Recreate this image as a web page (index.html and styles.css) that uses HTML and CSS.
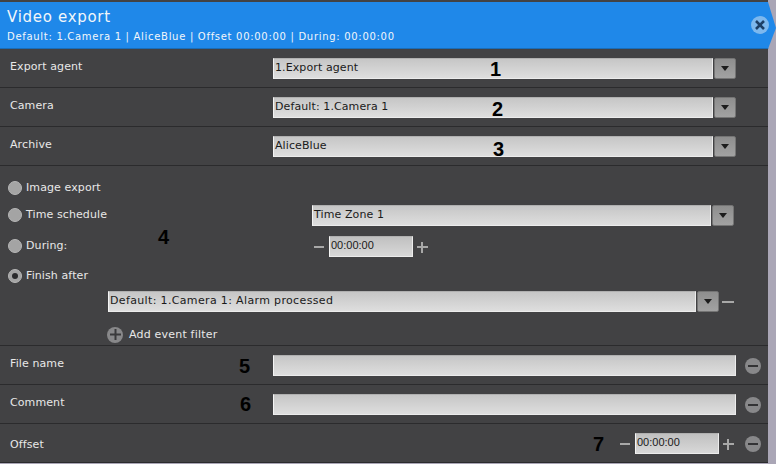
FILE: index.html
```html
<!DOCTYPE html>
<html lang="en">
<head>
  <meta charset="UTF-8">
  <title>Video export</title>
  <link rel="stylesheet" href="styles.css">
</head>
<body>

  <div class="panel">
    <div class="header">
      <div class="title">Video export</div>
      <div class="subtitle">Default: 1.Camera 1 | AliceBlue | Offset 00:00:00 | During: 00:00:00</div>
      <div class="close">
        <svg width="12" height="12" viewBox="0 0 12 12"><path d="M2 2l8 8M10 2l-8 8" stroke="#1d3f66" stroke-width="2.6"/></svg>
      </div>
    </div>

    <div class="row">
      <div class="row-label">Export agent</div>
      <div class="combo">
        <div class="field">1.Export agent</div>
        <div class="arrow"><span class="tri"></span></div>
      </div>
      <span class="mark mark-1">1</span>
    </div>

    <div class="row">
      <div class="row-label">Camera</div>
      <div class="combo">
        <div class="field">Default: 1.Camera 1</div>
        <div class="arrow"><span class="tri"></span></div>
      </div>
      <span class="mark mark-2">2</span>
    </div>

    <div class="row">
      <div class="row-label">Archive</div>
      <div class="combo">
        <div class="field">AliceBlue</div>
        <div class="arrow"><span class="tri"></span></div>
      </div>
      <span class="mark mark-3">3</span>
    </div>

    <div class="mode">
      <span class="mark mark-4">4</span>

      <div class="mode-line line-image">
        <div class="radio-label"><span class="radio"></span>Image export</div>
      </div>

      <div class="mode-line line-time">
        <div class="radio-label"><span class="radio"></span>Time schedule</div>
        <div class="combo combo-zone">
          <div class="field">Time Zone 1</div>
          <div class="arrow"><span class="tri"></span></div>
        </div>
      </div>

      <div class="mode-line line-during">
        <div class="radio-label"><span class="radio"></span>During:</div>
        <div class="stepper">
          <span class="step-minus"></span>
          <div class="field time-field">00:00:00</div>
          <span class="step-plus"></span>
        </div>
      </div>

      <div class="mode-line line-finish">
        <div class="radio-label"><span class="radio radio-on"></span>Finish after</div>
      </div>

      <div class="filter-line">
        <div class="combo combo-filter">
          <div class="field">Default: 1.Camera 1: Alarm processed</div>
          <div class="arrow"><span class="tri"></span></div>
        </div>
        <span class="step-minus"></span>
      </div>

      <div class="add-line">
        <span class="round-btn">
          <svg width="11" height="11" viewBox="0 0 11 11"><path d="M5.5 0v11M0 5.5h11" stroke="#3a3a3c" stroke-width="2"/></svg>
        </span>
        Add event filter
      </div>
    </div>

    <div class="row">
      <div class="row-label">File name</div>
      <div class="field wide-field"></div>
      <span class="round-btn remove-btn"><span class="bar"></span></span>
      <span class="mark mark-5">5</span>
    </div>

    <div class="row">
      <div class="row-label">Comment</div>
      <div class="field wide-field"></div>
      <span class="round-btn remove-btn"><span class="bar"></span></span>
      <span class="mark mark-6">6</span>
    </div>

    <div class="row row-offset">
      <div class="row-label">Offset</div>
      <div class="stepper">
        <span class="step-minus"></span>
        <div class="field time-field">00:00:00</div>
        <span class="step-plus"></span>
      </div>
      <span class="round-btn remove-btn"><span class="bar"></span></span>
      <span class="mark mark-7">7</span>
    </div>
  </div>

</body>
</html>
```

FILE: styles.css
```css
body {
  margin: 0;
  height: 464px;
  overflow: hidden;
  background-color: #aaa6b6;
  font-family: "DejaVu Sans", Verdana, sans-serif;
  font-size: 11px;
  letter-spacing: 0.1px;
  color: #e8e8e8;
}

.panel {
  position: relative;
  width: 768px;
  height: 463px;
  padding-top: 2px;
  box-sizing: border-box;
  background-color: #424244;
}

.header {
  position: relative;
  width: 776px;
  height: 47px;
  box-sizing: border-box;
  padding: 6px 0 0 7px;
  background-color: #1f88e9;
  border-bottom: 1px solid #1a6db8;
  clip-path: polygon(0 0, 768px 0, 776px 26px, 768px 47px, 0 47px);
  color: #f2f6fa;
}

.title {
  font-size: 15px;
  line-height: 18px;
  letter-spacing: 0.7px;
}

.subtitle {
  margin-top: 4px;
  font-size: 10px;
  line-height: 13px;
  letter-spacing: 0.7px;
}

.close {
  position: absolute;
  right: 7px;
  top: 14px;
  width: 18px;
  height: 18px;
  display: flex;
  align-items: center;
  justify-content: center;
  border-radius: 50%;
  background-color: #7db8ee;
}

.row {
  position: relative;
  display: flex;
  align-items: flex-start;
  height: 39px;
  box-sizing: border-box;
  padding: 9px 0 0 10px;
  border-bottom: 1px solid #2b2b2d;
}

.row-label {
  width: 263px;
  line-height: 17px;
}

.combo {
  display: flex;
  gap: 1px;
  width: 463px;
}

.field {
  flex: 1;
  height: 21px;
  box-sizing: border-box;
  padding: 0 1px;
  line-height: 17px;
  color: #1a1a1a;
  background: linear-gradient(#c6c6c6, #dedede);
  border: 1px solid #ececec;
  border-top-color: #b0b0b0;
  border-left-color: #f4f4f4;
}

.arrow {
  display: flex;
  align-items: center;
  justify-content: center;
  width: 22px;
  height: 21px;
  box-sizing: border-box;
  background: linear-gradient(#8e8e8e, #a2a2a2);
  border: 1px solid #747474;
  border-radius: 2px;
}

.tri {
  width: 0;
  height: 0;
  border-left: 4px solid transparent;
  border-right: 4px solid transparent;
  border-top: 5px solid #1c1c1c;
}

.wide-field {
  flex: none;
  width: 463px;
}

.round-btn {
  display: flex;
  align-items: center;
  justify-content: center;
  width: 16px;
  height: 16px;
  border-radius: 50%;
  background-color: #88888a;
}

.remove-btn {
  margin: 3px 0 0 9px;
}

.bar {
  width: 10px;
  height: 2px;
  background-color: #333335;
}

.mode {
  position: relative;
  height: 180px;
  box-sizing: border-box;
  padding: 11px 0 0 8px;
  border-bottom: 1px solid #2b2b2d;
}

.mode-line {
  display: flex;
  height: 21px;
}

.line-time {
  margin-top: 7px;
}

.line-during {
  margin-top: 10px;
}

.line-finish {
  margin-top: 8px;
}

.radio-label {
  display: flex;
  align-items: center;
  gap: 4px;
  width: 304px;
  height: 21px;
}

.line-time .radio-label,
.line-during .radio-label {
  height: 19px;
}

.radio {
  display: flex;
  align-items: center;
  justify-content: center;
  width: 14px;
  height: 14px;
  box-sizing: border-box;
  border-radius: 50%;
  background-color: #a4a4a4;
  border: 1px solid #b6b6b6;
}

.radio-on::after {
  content: "";
  width: 6px;
  height: 6px;
  border-radius: 50%;
  background-color: #2a2a2c;
}

.combo-zone {
  width: 422px;
}

.stepper {
  display: flex;
  align-items: center;
}

.time-field {
  flex: none;
  width: 84px;
  margin: 0 4px 0 5px;
  font-family: "Liberation Sans", Arial, sans-serif;
  letter-spacing: 0;
  background: linear-gradient(#c0c0c0, #d8d8d8);
}

.step-minus {
  width: 10px;
  height: 2px;
  margin-left: 2px;
  background-color: #a8a8a8;
}

.step-plus {
  position: relative;
  width: 11px;
  height: 2px;
  background-color: #a8a8a8;
}

.step-plus::after {
  content: "";
  position: absolute;
  left: 4px;
  top: -4px;
  width: 2px;
  height: 11px;
  background-color: #a8a8a8;
}

.filter-line {
  display: flex;
  align-items: center;
  margin: 5px 0 0 100px;
}

.combo-filter {
  width: 611px;
  letter-spacing: 0.35px;
}

.filter-line .step-minus {
  width: 12px;
  margin-left: 3px;
}

.add-line {
  display: flex;
  align-items: center;
  gap: 6px;
  height: 21px;
  margin: 12px 0 0 99px;
  letter-spacing: 0.2px;
}

.row-offset .row-label {
  flex: none;
  width: 0;
  line-height: 23px;
  white-space: nowrap;
}

.row-offset .stepper {
  margin-left: 608px;
}

.row-offset .remove-btn {
  margin-left: 11px;
}

/* annotation numbers drawn over the screenshot */
.mark {
  position: absolute;
  font-family: "Liberation Sans", Arial, sans-serif;
  font-size: 20px;
  font-weight: bold;
  line-height: 20px;
  letter-spacing: 0;
  color: #000;
}

.mark-1 { left: 490px; top: 10px; }
.mark-2 { left: 492px; top: 11px; }
.mark-3 { left: 493px; top: 12px; }
.mark-4 { left: 158px; top: 61px; }
.mark-5 { left: 239px; top: 10px; }
.mark-6 { left: 240px; top: 9px; }
.mark-7 { left: 593px; top: 10px; }
```
